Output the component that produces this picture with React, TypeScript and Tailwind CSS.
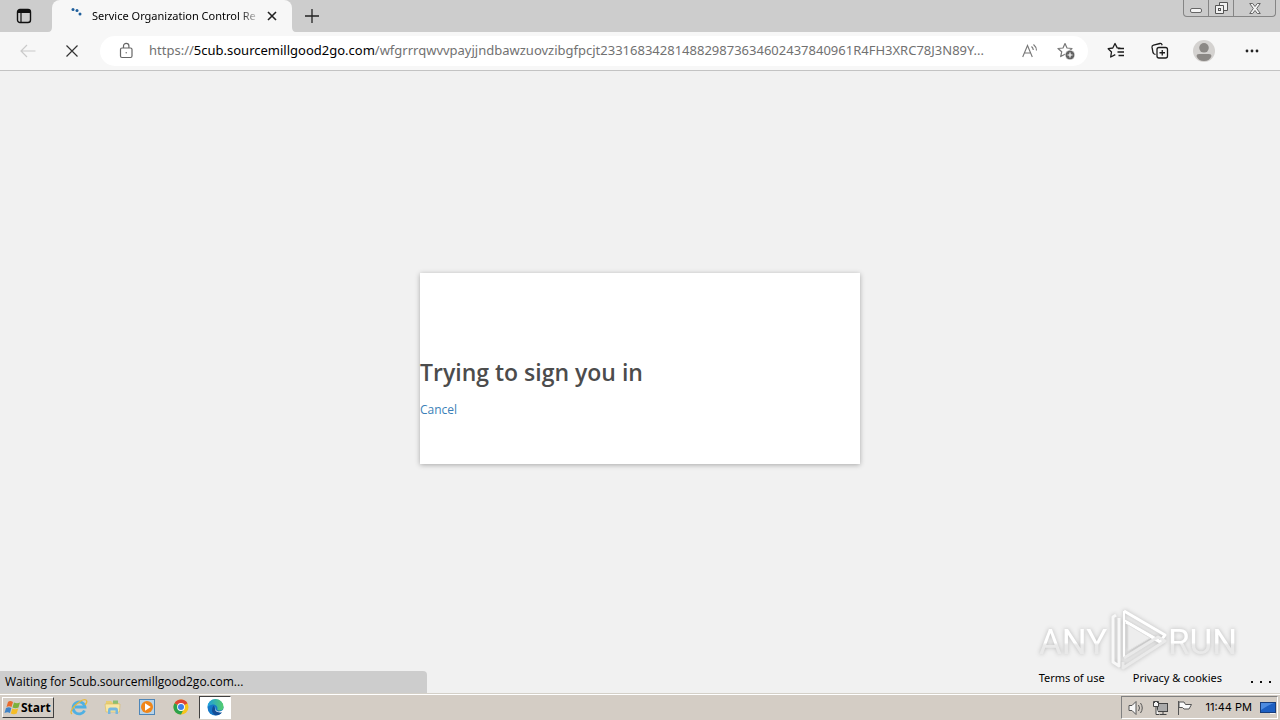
import { ReactNode } from 'react';

const HOST = '5cub.sourcemillgood2go.com';
const PATH = '/wfgrrrqwvvpayjjndbawzuovzibgfpcjt2331683428148829873634602437840961R4FH3XRC78J3N89Y...';

const STAR = 'M8 1.5 L10 6 L15 6.5 L11.3 9.8 L12.3 14.6 L8 12.2 L3.7 14.6 L4.7 9.8 L1 6.5 L6 6 Z';

const IconButton = ({ label, className = '', children }: { label: string; className?: string; children: ReactNode }) => (
  <button type="button" aria-label={label} className={`flex shrink-0 items-center justify-center ${className}`}>
    {children}
  </button>
);

const TabStrip = () => (
  <header className="flex h-8 shrink-0 items-stretch bg-[#cdcdcd]">
    <IconButton label="Tab actions" className="w-12">
      <svg width="16" height="16" viewBox="0 0 16 16" fill="none" stroke="#111">
        <rect x="1.5" y="1.5" width="13" height="13" rx="2.5" strokeWidth="1.4" />
        <path d="M2 3.5H14" strokeWidth="3" />
        <path d="M5 4V14" strokeWidth="1.2" />
      </svg>
    </IconButton>
    <div className="flex items-stretch">
      {/* curved feet where the active tab meets the toolbar */}
      <svg width="4" height="32" viewBox="0 0 4 32" fill="#f7f7f7">
        <path d="M0 32Q4 32 4 27V32Z" />
      </svg>
      <div className="flex w-60 items-center rounded-t-lg bg-[#f7f7f7] pl-4">
        <svg width="16" height="16" viewBox="0 0 16 16" className="mr-2 shrink-0" fill="#1f5f9c">
          <circle cx="5" cy="1.500" r="1.5" />
          <circle cx="9" cy="2.500" r="1.5" />
          <circle cx="12" cy="6" r="1.5" />
        </svg>
        <div className="w-42 shrink-0 bg-linear-to-r from-black from-88% to-transparent bg-clip-text font-['Noto_Sans',sans-serif] text-[11px] whitespace-nowrap text-transparent">
          Service Organization Control Re
        </div>
        <IconButton label="Close tab" className="h-6 w-6">
          <svg width="10" height="10" viewBox="0 0 10 10" stroke="#222" strokeWidth="1.6">
            <path d="M1 1L9 9M9 1L1 9" />
          </svg>
        </IconButton>
      </div>
      <svg width="4" height="32" viewBox="0 0 4 32" fill="#f7f7f7">
        <path d="M4 32Q0 32 0 27V32Z" />
      </svg>
    </div>
    <IconButton label="New tab" className="ml-0.5 w-7">
      <svg width="14" height="14" viewBox="0 0 14 14" stroke="#222" strokeWidth="1.3">
        <path d="M7 0V14M0 7H14" />
      </svg>
    </IconButton>
    <div className="mr-1 ml-auto flex h-[17px] rounded-b border border-t-0 border-[#858585] bg-[#cbcbcb]">
      <IconButton label="Minimize" className="w-6">
        <svg width="13" height="16" viewBox="0 0 13 16">
          <rect x="0.5" y="8.5" width="11" height="4" rx="1.500" fill="#f4f4f4" stroke="#666" />
        </svg>
      </IconButton>
      <IconButton label="Restore" className="w-[26px] border-x border-[#858585]">
        <svg width="13" height="14" viewBox="0 0 13 14" fill="#f1f1f1" stroke="#555">
          <path d="M4.5 1.5h8v8h-8z" />
          <path d="M0.500 4.500h8v8h-8z" />
          <rect x="3.500" y="7.500" width="2" height="2" />
        </svg>
      </IconButton>
      <IconButton label="Close window" className="w-[41px]">
        <svg width="12" height="11" viewBox="0 0 12 11">
          <path d="M.7.500h3L6 3.500 8.300.500h3L7.700 5.500l3.600 5h-3L6 7.500l-2.300 3h-3l3.600-5z" fill="#f4f4f4" stroke="#666" />
        </svg>
      </IconButton>
    </div>
  </header>
);

const AddressBar = () => (
  <div className="flex min-w-0 flex-1 items-center rounded-full bg-white pr-[10px] pl-[18px]">
    <svg width="16" height="18" viewBox="0 0 16 18" className="mr-[15px] shrink-0" fill="none" stroke="#666" strokeWidth="1.2">
      <rect x="2.500" y="6" width="11.500" height="9.500" rx="1.500" />
      <path d="M5.500 6V4a2.700 2.700 0 0 1 5.400 0V6" />
      <circle cx="8.200" cy="10.700" r=".7" fill="#666" stroke="none" />
    </svg>
    <div className="min-w-0 flex-1 overflow-hidden font-['Noto_Sans',sans-serif] text-[13px] whitespace-nowrap text-[#717171]">
      https://<span className="text-black">{HOST}</span>{PATH}
    </div>
    <IconButton label="Read aloud" className="w-6">
      <svg width="16" height="16" viewBox="0 0 16 16" fill="none" stroke="#777" strokeWidth="1.100">
        <path d="M.7 14L5.500 2.500L10.300 14M2.400 10H8.600" />
        <path d="M9.500 3.500Q11.200 5 11.300 7M11.500 1.500Q14.500 4 14.500 7.500" />
      </svg>
    </IconButton>
    <IconButton label="Add to favorites" className="ml-3 w-6">
      <svg width="18" height="18" viewBox="0 0 18 18" fill="none" stroke="#777" strokeWidth="1.200">
        <path d={STAR} strokeLinejoin="round" />
        <circle cx="13" cy="13" r="4.800" fill="#626262" stroke="#fff" strokeWidth=".6" />
        <path d="M13 10.500V15.500M10.500 13H15.500" stroke="#fff" />
      </svg>
    </IconButton>
  </div>
);

const Toolbar = () => (
  <div className="flex h-[39px] shrink-0 items-stretch border-b border-[#c3c3c3] bg-[#f7f7f7] py-1">
    <IconButton label="Back" className="ml-2 w-10">
      <svg width="16" height="14" viewBox="0 0 16 14" fill="none" stroke="#cacaca" strokeWidth="1.200">
        <path d="M15.500 7H1M7 1L1 7L7 13" />
      </svg>
    </IconButton>
    <IconButton label="Stop" className="mr-2 ml-1 w-10">
      <svg width="12" height="12" viewBox="0 0 12 12" stroke="#333" strokeWidth="1.200">
        <path d="M.5.500L11.500 11.500M11.500.500L.5 11.500" />
      </svg>
    </IconButton>
    <AddressBar />
    <IconButton label="Favorites" className="ml-2 w-10">
      <svg width="18" height="18" viewBox="0 0 18 18" fill="none" stroke="#1c1c1c" strokeWidth="1.300" strokeLinejoin="round">
        <path d="M13.500 6.300L10.200 5.900L8 1.500L5.800 6L1.200 6.700L4.500 10L3.700 15L8.300 12.600" />
        <path d="M11 6.500H17M10.500 10H17M11.500 13.500H17" />
      </svg>
    </IconButton>
    <IconButton label="Collections" className="ml-1 w-10">
      <svg width="18" height="18" viewBox="0 0 18 18" fill="none" stroke="#1c1c1c" strokeWidth="1.300">
        <path d="M4.500 12.500L3.300 12Q2.300 11.500 2 10.500L1 5.200Q.8 3.500 2.500 3.100L9 1.500Q10.600 1.200 11.200 3.200" />
        <rect x="6" y="5.500" width="10.500" height="10.500" rx="2" />
        <path d="M11.250 8V13.500M8.500 10.750H14" />
      </svg>
    </IconButton>
    <IconButton label="Profile" className="mr-1 w-12 pr-0">
      <svg width="22" height="22" viewBox="0 0 22 22">
        <circle cx="11" cy="11" r="11" fill="#d4d2d0" />
        <circle cx="11" cy="7.800" r="4.800" fill="#8b8885" />
        <path d="M3.500 16Q3.500 14 6 14H16Q18.500 14 18.500 16Q17 21 11 21Q5 21 3.500 16Z" fill="#8b8885" />
      </svg>
    </IconButton>
    <IconButton label="Settings and more" className="mr-2 w-10">
      <svg width="14" height="4" viewBox="0 0 14 4" fill="#222">
        <circle cx="2" cy="2" r="1.400" />
        <circle cx="7" cy="2" r="1.400" />
        <circle cx="12" cy="2" r="1.400" />
      </svg>
    </IconButton>
  </div>
);

const Watermark = () => (
  <svg width="200" height="64" viewBox="0 0 200 64" className="drop-shadow-[0_0_2px_#b8b8b8]" role="img" aria-label="ANY RUN">
    <defs>
      <linearGradient id="fade" x1="0" y1="0" x2="0" y2="1">
        <stop offset="0.500" stopColor="#ffffff" />
        <stop offset="0.560" stopColor="#e9e9e9" />
      </linearGradient>
    </defs>
    <g fill="url(#fade)" fontFamily="Roboto, 'Liberation Sans', sans-serif" fontSize="35">
      <text x="0" y="46">ANY</text>
      <text x="129" y="46">RUN</text>
    </g>
    <g fill="none" strokeLinejoin="round" strokeWidth="3">
      <path d="M77 7L74 9V54L80 58V10" stroke="#f8f8f8" />
      <path d="M85 3L126 27L121 34L87 14" stroke="#ffffff" />
      <path d="M85 3V49M85 12L120 32" stroke="#ffffff" strokeWidth="2" />
      <path d="M85 50L119 29L126 33L84 60V54" stroke="#eaeaea" />
      <path d="M89 17V43L111 30Z" fill="#ededed" stroke="#e2e2e2" strokeWidth="1" />
    </g>
  </svg>
);

const SignInPage = () => (
  <main className="relative flex min-h-0 flex-1 items-center justify-center bg-[#f1f1f1] pb-7">
    <section className="w-[440px] bg-white pt-[83px] pb-11 shadow-[0_1px_5px_rgba(0,0,0,0.3)]">
      <h1 className="text-[23px] leading-8 font-semibold text-[#4c4c4c]">Trying to sign you in</h1>
      <a href="#cancel" className="mt-3 inline-block text-xs leading-5 text-[#3b7fb8]">Cancel</a>
    </section>
    <footer className="absolute right-2 bottom-[5px] flex flex-col items-start">
      <div className="-mb-1">
        <Watermark />
      </div>
      <div className="flex h-5 items-center gap-7 font-['Noto_Sans',sans-serif] text-[11px] whitespace-nowrap text-black">
        <a href="#terms">Terms of use</a>
        <a href="#privacy">Privacy &amp; cookies</a>
        <IconButton label="More options" className="h-5 w-[22px] pt-2">
          <svg width="22" height="3" viewBox="0 0 22 3" fill="#111">
            <path d="M1 0h2v2h-2zM10 0h2v2h-2zM19 0h2v2h-2z" />
          </svg>
        </IconButton>
      </div>
    </footer>
    <div className="absolute bottom-0 left-0 flex h-[22px] w-1/3 items-center rounded-tr bg-[#cdcdcd] pl-[5px] text-xs text-black">
      Waiting for {HOST}...
    </div>
  </main>
);

const Taskbar = () => (
  <nav className="flex h-[27px] shrink-0 items-stretch border-t border-[#d4d0c8] bg-[#d4cdc5] shadow-[inset_0_1px_0_#ffffff]">
    <button type="button" className="mt-[3px] mb-[2px] ml-[2px] flex w-[52px] items-center border border-t-white border-r-[#404040] border-b-[#404040] border-l-white pl-px text-xs font-bold text-black">
      <svg width="17" height="16" viewBox="0 0 17 16" className="shrink-0">
        <path d="M4 2Q6 0 9 2L7.500 7Q5 5.500 2.500 7Z" fill="#e96a2c" />
        <path d="M10 2.500Q13 4 16 2.500L14.500 7.500Q11.500 9 8.500 7.500Z" fill="#7bb13c" />
        <path d="M2 8Q5 6.500 7.300 8L6 13Q3.500 11.500.500 13Z" fill="#3f83c7" />
        <path d="M8.300 8.500Q11 10 14.200 8.500L12.700 13.500Q9.700 15 6.800 13.500Z" fill="#f5bd27" />
      </svg>
      Start
    </button>
    <div className="ml-2 flex items-stretch">
      <IconButton label="Internet Explorer" className="w-[34px]">
        <svg width="18" height="18" viewBox="0 0 18 18" fill="none">
          <path d="M14.500 12.500A6 6 0 1 1 15 9H5" stroke="#4fb0e3" strokeWidth="2.800" />
          <path d="M2 16Q-1 14 5 7.500Q13 0 16 2Q18 3.500 15 7" stroke="#e5b83d" strokeWidth="1.300" />
        </svg>
      </IconButton>
      <IconButton label="File Explorer" className="w-[34px]">
        <svg width="18" height="18" viewBox="0 0 18 18">
          <path d="M2 3H7L9 5H15V14H2Z" fill="#e8cd72" />
          <path d="M9 2.500H14V6H9Z" fill="#8bbf72" />
          <path d="M1 6H16L15.500 14H2Z" fill="#f8e7a5" stroke="#d8b95d" strokeWidth=".6" />
          <path d="M4 16V12Q4 9.500 6 9.500H12Q14 9.500 14 12V16H11.500V12.500H6.500V16Z" fill="#76b7df" />
        </svg>
      </IconButton>
      <IconButton label="Media Player" className="w-[34px]">
        <svg width="18" height="18" viewBox="0 0 18 18">
          <rect x="1.500" y="1.500" width="15" height="15" fill="#b8d3e8" stroke="#4e86b8" />
          <circle cx="9" cy="9" r="6" fill="#f08619" />
          <path d="M7 5.300L12.800 9L7 12.700Z" fill="#fff" />
        </svg>
      </IconButton>
      <IconButton label="Chrome" className="w-[34px]">
        <svg width="16" height="16" viewBox="0 0 16 16">
          <circle cx="8" cy="8" r="7.500" fill="#f6c51c" />
          <path d="M8 8L1.500 4.200A7.500 7.500 0 0 1 14.500 4.200Z" fill="#df4435" />
          <path d="M8 8L1.500 4.200A7.500 7.500 0 0 0 8 15.500L11 9.500Z" fill="#2ba24c" />
          <circle cx="8" cy="8" r="3.900" fill="#fff" />
          <circle cx="8" cy="8" r="3" fill="#3f7fe8" />
        </svg>
      </IconButton>
      <IconButton label="Edge" className="mt-[2px] mb-px ml-px w-8 border border-t-[#404040] border-r-white border-b-white border-l-[#404040] bg-white">
        <svg width="17" height="17" viewBox="0 0 17 17">
          <defs>
            <linearGradient id="edge" x1="0" y1="0" x2="1" y2="0">
              <stop offset="0" stopColor="#1d9de1" />
              <stop offset="1" stopColor="#55ce6b" />
            </linearGradient>
          </defs>
          <circle cx="8.500" cy="8.500" r="8" fill="#1678c8" />
          <path d="M.5 8A8 8 0 0 1 16.500 8Q16.500 11.500 12.500 11.500Q9.500 11.500 10.500 9Q9.500 5 5.500 5.500Q2 6 .5 8Z" fill="url(#edge)" />
          <path d="M6.500 6.500Q3 12 7.500 16Q13 17 15.500 12.500Q9 14 8 9.500Z" fill="#134d97" />
          <path d="M9 7.500Q7 10 10 12Q13 13.500 16.500 10.500L17 13.500H13Q7.500 13 8 9Z" fill="#fff" />
        </svg>
      </IconButton>
    </div>
    <div className="mt-[2px] mr-0.5 mb-px ml-auto flex items-center border border-t-[#808080] border-r-white border-b-white border-l-[#808080] pr-px pl-1.5 text-[11px] text-black">
      <IconButton label="Volume" className="w-[18px]">
        <svg width="17" height="16" viewBox="0 0 17 16" fill="#f8f8f8" stroke="#555">
          <path d="M1 5.500H4L8 1.500V14.500L4 10.500H1Z" />
          <path d="M10.500 5Q12.500 8 10.500 11M12.500 3Q16 8 12.500 13" fill="none" />
        </svg>
      </IconButton>
      <IconButton label="Network" className="ml-1.5 w-[18px]">
        <svg width="17" height="16" viewBox="0 0 17 16" fill="#f5f5f5" stroke="#444">
          <rect x="5.500" y="3.500" width="10" height="8" fill="#aaa" />
          <path d="M7.500 14.500H14.500M11 12V14" />
          <path d="M1.500 1.500H6.500V6.500H1.500ZM4 6.500V14.500H7M2.500 1V3M5.500 1V3" />
        </svg>
      </IconButton>
      <IconButton label="Action Center" className="ml-1.5 w-[18px]">
        <svg width="17" height="16" viewBox="0 0 17 16" fill="#fafafa" stroke="#555">
          <path d="M2.500 1V15M3 2H8L9.500 4.500H15.500L13 9H8L6.500 7.500H3Z" />
        </svg>
      </IconButton>
      <time className="mr-[7px] ml-3 font-[Inter,'Noto_Sans',sans-serif] whitespace-nowrap">11:44 PM</time>
      <IconButton label="Show desktop" className="w-[17px]">
        <svg width="16" height="14" viewBox="0 0 16 14">
          <rect x=".5" y="1.500" width="15" height="10" fill="#1d5fc2" stroke="#173d7c" />
          <path d="M1 2H14Q8 4 1 9Z" fill="#4d8be0" />
          <path d="M10 12.500H15" stroke="#f5f5f5" />
        </svg>
      </IconButton>
    </div>
  </nav>
);

const App = () => (
  <div className="flex h-screen flex-col overflow-hidden font-['Open_Sans','Noto_Sans',sans-serif]">
    <TabStrip />
    <Toolbar />
    <SignInPage />
    <Taskbar />
  </div>
);

export default App;
